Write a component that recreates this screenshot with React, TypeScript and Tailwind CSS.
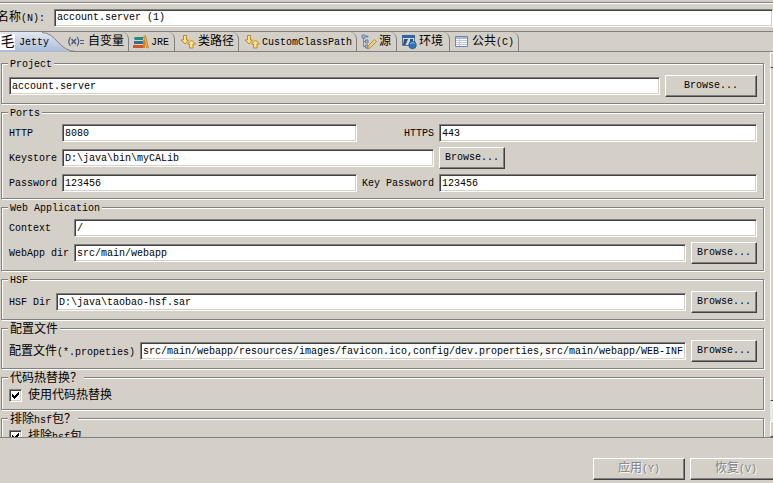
import type { ReactNode, InputHTMLAttributes } from "react";

const FONT = "font-['Liberation_Mono','Noto_Sans_CJK_SC',monospace]";

/** Latin runs are set at 10px; Han runs at 12px so that they take two cells. */
function Mixed({ text }: { text: string }) {
  const parts = text.split(/([\u4e00-\u9fff？]+)/).filter(Boolean);
  return (
    <span className="whitespace-pre">
      {parts.map((p, i) =>
        /[\u4e00-\u9fff？]/.test(p) ? (
          <span key={i} className="text-[12px]">
            {p}
          </span>
        ) : (
          <span key={i}>{p}</span>
        ),
      )}
    </span>
  );
}

function Label({ id, text, className = "" }: { id: string; text: string; className?: string }) {
  return (
    <label htmlFor={id} className={`shrink-0 pt-0.5 ${className}`}>
      <Mixed text={text} />
    </label>
  );
}

function TextBox({ className = "", ...rest }: InputHTMLAttributes<HTMLInputElement>) {
  return (
    <input
      type="text"
      className={`h-[18px] w-full min-w-0 rounded-none border border-t-[#808080] border-l-[#808080] border-r-white border-b-white bg-white px-0.5 text-[10px] leading-4 text-black shadow-[inset_1px_1px_0_#404040,inset_-1px_-1px_0_#d4d0c8] outline-none ${className}`}
      {...rest}
    />
  );
}

function Button({ children, className = "", disabled }: { children: ReactNode; className?: string; disabled?: boolean }) {
  return (
    <button
      type="button"
      disabled={disabled}
      className={`flex h-[22px] shrink-0 items-center justify-center border border-t-white border-l-white border-r-[#404040] border-b-[#404040] bg-[#d4d0c8] leading-4 shadow-[inset_-1px_-1px_0_#808080] disabled:text-[#808080] disabled:[text-shadow:1px_1px_0_#fff] ${className}`}
    >
      {children}
    </button>
  );
}

function Group({ title, className = "", children }: { title: string; className?: string; children: ReactNode }) {
  return (
    <fieldset className={`min-w-0 border border-[#808080] pr-1.5 pl-[7px] shadow-[1px_1px_0_#fff,inset_1px_1px_0_#fff] ${className}`}>
      <legend className="-ml-px h-3 bg-[#d4d0c8] px-0.5 leading-4">
        <Mixed text={title} />
      </legend>
      {children}
    </fieldset>
  );
}

function FileRow({ id, label, value }: { id: string; label: string; value: string }) {
  return (
    <div className="flex items-center gap-[5px]">
      <Label id={id} text={label} />
      <TextBox id={id} defaultValue={value} />
      <Button className="w-[66px]">Browse...</Button>
    </div>
  );
}

function Tick({ id, label }: { id: string; label: string }) {
  return (
    <div className="flex h-3.5 items-center gap-1.5">
      <span className="grid h-[13px] w-[13px] shrink-0">
        <input
          id={id}
          type="checkbox"
          defaultChecked
          className="col-start-1 row-start-1 h-[13px] w-[13px] appearance-none border border-t-[#808080] border-l-[#808080] border-r-white border-b-white bg-white shadow-[inset_1px_1px_0_#404040,inset_-1px_-1px_0_#d4d0c8]"
        />
        <svg viewBox="0 0 13 13" className="pointer-events-none col-start-1 row-start-1 h-[13px] w-[13px]" shapeRendering="crispEdges">
          <path d="M3 5h1v1h1v1h1v-1h1v-1h1v-1h1v-1h1v3h-1v1h-1v1h-1v1h-1v1h-1v-1h-1v-1h-1z" />
        </svg>
      </span>
      <Label id={id} text={label} />
    </div>
  );
}

const VariableIcon = () => (
  <svg viewBox="0 0 18 16" className="h-4 w-[18px] shrink-0" fill="none" stroke="#4a607e">
    <path d="M3.500 3Q0 7.500 3.500 12M10 3q3.500 4.500 0 9" strokeWidth="1.200" />
    <path d="M4.500 5l4.500 5M9 5l-4.500 5" strokeWidth="1.600" />
    <path d="M13 6.500h4M13 9.500h4" />
  </svg>
);

const JreIcon = () => (
  <svg viewBox="0 0 16 16" className="h-4 w-4 shrink-0">
    <path d="M2 3h8v3H2L1 4.500z" fill="#278a78" />
    <path d="M1 7h9v3H1z" fill="#2f6ca0" />
    <path d="M0 11h10v3H0z" fill="#d2542a" />
    <path d="M2 6.500h8M1 10.500h9" stroke="#e3d9b4" />
    <path d="M10.500 2.500l2-1 3 12-2 .5z" fill="#f0ad3c" stroke="#b96f1e" strokeWidth=".6" />
    <path d="M10 6h2v8h-2z" fill="#d9822b" />
  </svg>
);

const ClasspathIcon = () => (
  <svg viewBox="0 0 16 16" className="h-4 w-4 shrink-0" fill="#fbe188" stroke="#b98a2c" strokeLinejoin="round">
    <path d="M3.500 1.500h3v4.500h2L5 10 1 6h2.500z" />
    <path d="M9.500 14v-4H7.500l4-4 4 4h-2.500v4z" />
  </svg>
);

const SourceIcon = () => (
  <svg viewBox="0 0 16 16" className="h-4 w-4 shrink-0">
    <path d="M2.500 3v9.500H5M2.500 7.500H5" fill="none" stroke="#6d87b4" />
    <path d="M1 1h3v3H1zM5 2h2v1H5zM4.500 6h2.500v3H4.500zM4.500 11h2.500v3H4.500z" fill="#a9bfe0" stroke="#54719f" strokeWidth=".8" />
    <path d="M13.500 5.500l2 2-6 6-3 1.500 1-3.500z" fill="#f4cf7a" stroke="#a87a35" strokeWidth=".8" />
  </svg>
);

const EnvironmentIcon = () => (
  <svg viewBox="0 0 16 16" className="h-4 w-4 shrink-0">
    <path d="M1.500 1.500h12v10h-12z" fill="#c9d8ea" stroke="#52749f" />
    <path d="M1 1h13v3H1z" fill="#2f66a5" />
    <path d="M3 5h4l-2.500 6H2zM9 5h3v3L9 10z" fill="#3e5068" />
    <circle cx="11.500" cy="11" r="3.800" fill="#2f74b5" stroke="#24578d" strokeWidth=".7" />
    <path d="M9.500 9.500q2-2 4 0" stroke="#9bc9ee" fill="none" />
  </svg>
);

const CommonIcon = () => (
  <svg viewBox="0 0 16 16" className="h-4 w-4 shrink-0">
    <path d="M1.500 2.500h12v10h-12z" fill="#fff" stroke="#6f86ac" />
    <path d="M2 3h11v2H2z" fill="#a9bcd9" />
    <path d="M2 6.500h11M2 8.500h11M2 10.500h11M5.500 5v7" stroke="#b8c5dc" />
  </svg>
);

function Tab({ icon, label, className }: { icon: ReactNode; label: string; className: string }) {
  return (
    <button
      type="button"
      role="tab"
      className={`flex h-full shrink-0 items-center gap-0.5 rounded-tr-[7px] border-r border-[#808080] ${className}`}
    >
      {icon}
      <span className="pt-0.5">
        <Mixed text={label} />
      </span>
    </button>
  );
}

function JettyTab() {
  return (
    <button type="button" role="tab" aria-selected="true" className="grid h-full w-[67px] shrink-0">
      <svg viewBox="0 0 78 20" className="col-start-1 row-start-1 h-5 w-[78px]">
        <defs>
          <linearGradient id="active" x1="0" y1="0" x2="0" y2="1">
            <stop offset="0" stopColor="#e3e8f2" />
            <stop offset="1" stopColor="#a9bad9" />
          </linearGradient>
        </defs>
        <path d="M0 0h42c14 0 17 20 33 20H0z" fill="url(#active)" />
        <path d="M42 .5c14 0 17 19 34 19" fill="none" stroke="#808080" />
      </svg>
      <span className="col-start-1 row-start-1 flex items-center gap-1">
        <span className="flex h-4 w-[15px] items-center justify-center bg-white text-[14px] leading-4">毛</span>
        <span className="pt-0.5">Jetty</span>
      </span>
    </button>
  );
}

export default function App() {
  return (
    <main className={`flex h-screen flex-col overflow-hidden bg-[#d4d0c8] text-[10px] leading-4 text-black ${FONT}`}>
      <div className="h-1 shrink-0 border-b border-white shadow-[inset_0_-1px_0_#808080]" />
      <div className="flex h-[27px] shrink-0 items-center">
        <Label id="name" text="名称(N):" className="-ml-[3px] w-[57px]" />
        <TextBox id="name" defaultValue="account.server (1)" />
      </div>

      <div role="tablist" className="flex h-[21px] shrink-0 border-y border-[#808080]">
        <JettyTab />
        <Tab icon={<VariableIcon />} label="自变量" className="w-[62px] gap-[3px]" />
        <Tab icon={<JreIcon />} label="JRE" className="w-[46px] pl-1" />
        <Tab icon={<ClasspathIcon />} label="类路径" className="w-16 pl-[5px]" />
        <Tab icon={<ClasspathIcon />} label="CustomClassPath" className="w-[118px] pl-[5px]" />
        <Tab icon={<SourceIcon />} label="源" className="w-10 pl-1" />
        <Tab icon={<EnvironmentIcon />} label="环境" className="w-[53px] pl-1" />
        <Tab icon={<CommonIcon />} label="公共(C)" className="w-[69px] pl-1" />
      </div>

      <div className="flex min-h-0 flex-1 overflow-hidden border-b border-[#808080]">
        <div className="flex min-w-0 flex-1 flex-col gap-0.5 pt-[5px] pr-1.5 pl-px">
          <Group title="Project" className="py-1.5">
            <div className="flex items-center gap-[5px]">
              <TextBox aria-label="Project" defaultValue="account.server" />
              <Button className="w-[92px]">Browse...</Button>
            </div>
          </Group>

          <Group title="Ports" className="py-1">
            <div className="grid auto-rows-[22px] grid-cols-[48px_295fr_72px_318fr] items-center gap-x-[5px] gap-y-[3px]">
              <Label id="http" text="HTTP" />
              <TextBox id="http" defaultValue="8080" />
              <Label id="https" text="HTTPS" className="text-right" />
              <TextBox id="https" defaultValue="443" />
              <Label id="keystore" text="Keystore" />
              <TextBox id="keystore" defaultValue="D:\java\bin\myCALib" className="col-span-2" />
              <Button className="w-[66px]">Browse...</Button>
              <Label id="password" text="Password" />
              <TextBox id="password" defaultValue="123456" />
              <Label id="key-password" text="Key Password" className="text-right" />
              <TextBox id="key-password" defaultValue="123456" />
            </div>
          </Group>

          <Group title="Web Application" className="pt-1 pb-1.5">
            <div className="grid auto-rows-[22px] grid-cols-[60px_1fr_66px] items-center gap-x-[5px] gap-y-[3px]">
              <Label id="context" text="Context" />
              <TextBox id="context" defaultValue="/" className="col-span-2" />
              <Label id="webapp" text="WebApp dir" />
              <TextBox id="webapp" defaultValue="src/main/webapp" />
              <Button>Browse...</Button>
            </div>
          </Group>

          <Group title="HSF" className="py-1.5">
            <FileRow id="hsf" label="HSF Dir" value="D:\java\taobao-hsf.sar" />
          </Group>

          <Group title="配置文件" className="py-1.5">
            <FileRow
              id="config"
              label="配置文件(*.propeties)"
              value="src/main/webapp/resources/images/favicon.ico,config/dev.properties,src/main/webapp/WEB-INF"
            />
          </Group>

          <Group title="代码热替换？" className="pt-[5px] pb-[7px]">
            <Tick id="hot-swap" label="使用代码热替换" />
          </Group>

          <Group title="排除hsf包？" className="pt-[5px] pb-[7px]">
            <Tick id="exclude-hsf" label="排除hsf包" />
          </Group>
        </div>

        <div className="flex w-[3px] shrink-0 flex-col">
          <div className="h-4 border-t border-b border-l border-t-white border-b-[#404040] border-l-white" />
          <div className="flex-1 border-b border-l border-b-[#404040] border-l-white" />
          <div className="h-5 bg-[#ebe9e4]" />
          <div className="h-4 border-t border-b border-l border-t-white border-b-[#404040] border-l-white" />
        </div>
      </div>

      <div className="-mr-[9px] flex h-[45px] shrink-0 justify-end gap-[5px] pt-5">
        <Button disabled className="w-[92px]">
          <Mixed text="应用(Y)" />
        </Button>
        <Button disabled className="w-[92px]">
          <Mixed text="恢复(V)" />
        </Button>
      </div>
    </main>
  );
}
